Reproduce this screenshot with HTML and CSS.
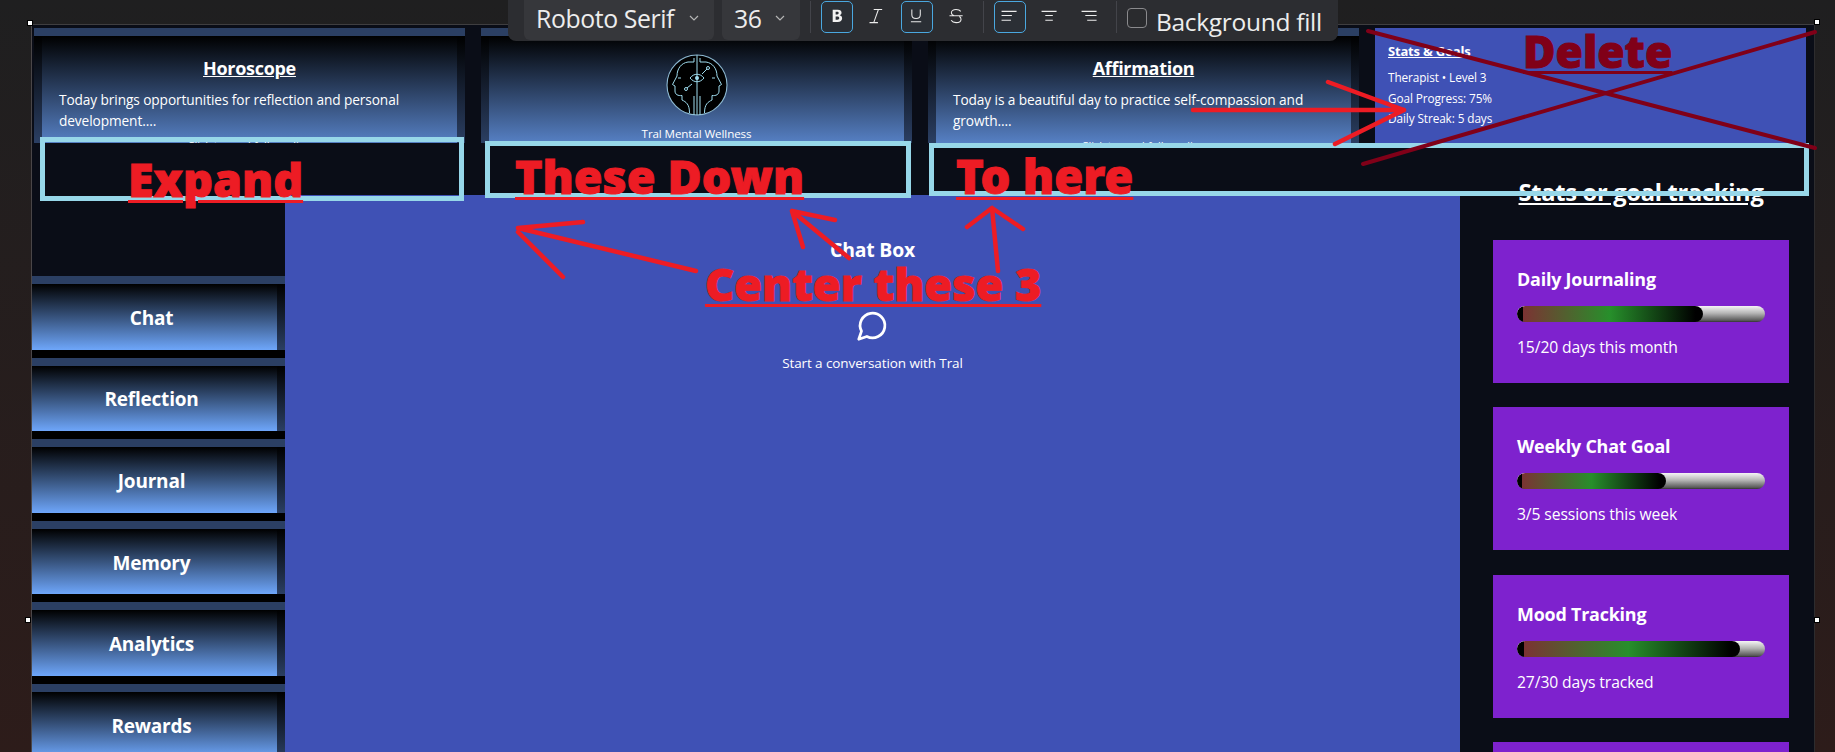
FILE: index.html
```html
<!DOCTYPE html>
<html lang="en">
<head>
<meta charset="utf-8">
<title>Tral Mental Wellness</title>
<link rel="stylesheet" href="styles.css">
</head>
<body>
<div class="stage">
  <header class="top">
    <section class="frame">
      <div class="card">
        <h3 class="card-title">Horoscope</h3>
        <p class="card-text">Today brings opportunities for reflection and personal development....</p>
        <p class="card-more">Click to read full reading</p>
      </div>
    </section>
    <section class="frame">
      <div class="card card-logo">
        <svg class="logo" viewBox="0 0 80 72" aria-label="Tral logo">
          <circle class="logo-disc" cx="40" cy="37" r="30"/>
          <g class="logo-line">
            <path d="M40 7V67"/>
            <path d="M37 10V14H31C24 15 20 21 20 28L15.500 36.500L18 38V43C18 46.500 21 48 25 47.500V52C29 54 32.500 56 32.500 65"/>
            <path d="M43 10V14H49C56 15 60 21 60 28L64.500 36.500L62 38V43C62 46.500 59 48 55 47.500V52C51 54 47.500 56 47.500 65"/>
            <path d="M37 67V48"/>
            <path d="M43 67V48"/>
            <path d="M30 40L35 36"/>
            <path d="M50 21L45 26"/>
            <path d="M33 30C37 25 43 25 47 30C43 35 37 35 33 30Z"/>
            <path d="M21 30H24M58 30H55"/>
            <circle cx="29" cy="41" r="1.500"/>
            <circle cx="51" cy="20" r="1.500"/>
            <circle class="logo-pupil" cx="40" cy="30" r="2"/>
          </g>
        </svg>
        <p class="logo-name">Tral Mental Wellness</p>
      </div>
    </section>
    <section class="frame">
      <div class="card">
        <h3 class="card-title">Affirmation</h3>
        <p class="card-text">Today is a beautiful day to practice self-compassion and growth....</p>
        <p class="card-more">Click to read full reading</p>
      </div>
    </section>
    <section class="stats">
      <h4 class="stats-title">Stats &amp; Goals</h4>
      <p class="stats-line">Therapist • Level 3</p>
      <p class="stats-line">Goal Progress: 75%</p>
      <p class="stats-line">Daily Streak: 5 days</p>
    </section>
  </header>

  <div class="body-row">
    <nav class="nav">
      <a class="nav-item"><span class="nav-label">Chat</span></a>
      <a class="nav-item"><span class="nav-label">Reflection</span></a>
      <a class="nav-item"><span class="nav-label">Journal</span></a>
      <a class="nav-item"><span class="nav-label">Memory</span></a>
      <a class="nav-item"><span class="nav-label">Analytics</span></a>
      <a class="nav-item"><span class="nav-label">Rewards</span></a>
    </nav>
    <main class="chat">
      <h2 class="chat-title">Chat Box</h2>
      <svg class="chat-icon" viewBox="0 0 24 24"><path d="M7.900 20A9 9 0 1 0 4 16.100L2 22Z"/></svg>
      <p class="chat-hint">Start a conversation with Tral</p>
    </main>
    <aside class="goals">
      <h2 class="goals-title">Stats or goal tracking</h2>
      <article class="goal">
        <h3 class="goal-name">Daily Journaling</h3>
        <div class="track"><div class="fill" style="width:75%"></div></div>
        <p class="goal-note">15/20 days this month</p>
      </article>
      <article class="goal">
        <h3 class="goal-name">Weekly Chat Goal</h3>
        <div class="track"><div class="fill" style="width:60%"></div></div>
        <p class="goal-note">3/5 sessions this week</p>
      </article>
      <article class="goal">
        <h3 class="goal-name">Mood Tracking</h3>
        <div class="track"><div class="fill" style="width:90%"></div></div>
        <p class="goal-note">27/30 days tracked</p>
      </article>
      <article class="goal"></article>
    </aside>
  </div>
</div>

<div class="toolbar">
  <div class="select select-font"><span>Roboto Serif</span><svg class="chev" viewBox="0 0 10 6"><path d="M1 1L5 5L9 1"/></svg></div>
  <div class="select select-size"><span>36</span><svg class="chev" viewBox="0 0 10 6"><path d="M1 1L5 5L9 1"/></svg></div>
  <i class="sep sep-a"></i>
  <div class="tool tool-on"><svg viewBox="0 0 32 32"><path class="solid" transform="translate(1.500 1.600) scale(.9 .82)" d="M11 8H17C20 8 21.500 9.700 21.500 12C21.500 13.600 20.700 14.700 19.300 15.300C21.100 15.800 22.200 17.200 22.200 19.100C22.200 22 20.200 24 17 24H11ZM14.500 10.800V14.300H16.300C17.500 14.300 18.100 13.600 18.100 12.500C18.100 11.400 17.500 10.800 16.300 10.800ZM14.500 16.800V21.200H16.500C18 21.200 18.800 20.400 18.800 19C18.800 17.600 18 16.800 16.500 16.800Z"/></svg></div>
  <div class="tool"><svg viewBox="0 0 32 32"><path d="M12.500 8H21.500M8 22H17M17.500 8L12.500 22"/></svg></div>
  <div class="tool tool-on"><svg viewBox="0 0 32 32"><path d="M10.500 8V13.500C10.500 16 12.500 17.500 15 17.500C17.500 17.500 19.500 16 19.500 13.500V8M9.500 21H20.500"/></svg></div>
  <div class="tool"><svg viewBox="0 0 32 32"><path d="M20 10C19 8.500 17 8 15 8C12 8 10 9.500 10 11.500C10 13 11 14 13 14.700M8 14.700H22M18.500 15.500C19.800 16.300 20.300 17 20.300 18.300C20.300 20.700 18 22 15 22C12.500 22 10.800 21.200 9.800 19.500"/></svg></div>
  <i class="sep sep-b"></i>
  <div class="tool tool-on"><svg viewBox="0 0 32 32"><path d="M7 10H23M7 14.500H18M7 19.500H17"/></svg></div>
  <div class="tool"><svg viewBox="0 0 32 32"><path d="M7 10H23M11 14.500H19M11 19.500H19"/></svg></div>
  <div class="tool"><svg viewBox="0 0 32 32"><path d="M7 10H23M11 14.500H23M13 19.500H23"/></svg></div>
  <i class="sep sep-c"></i>
  <span class="check-box"></span>
  <span class="check-label">Background fill</span>
</div>

<i class="handle handle-tl"></i>
<i class="handle handle-tr"></i>
<i class="handle handle-ml"></i>
<i class="handle handle-mr"></i>

<i class="mark mark-a"></i>
<i class="mark mark-b"></i>
<i class="mark mark-c"></i>

<svg class="ink" viewBox="0 0 1835 752">
  <g class="ink-red">
    <path d="M518 228L696 271M518 228L583 222M518 232L563 277"/>
    <path d="M792 211L849 258M792 211L835 220M792 211L803 247"/>
    <path d="M992 208L998 271M992 208L967 227M992 208L1023 229"/>
    <path d="M1193 110H1404M1404 110L1328 82M1404 110L1335 144"/>
  </g>
  <g class="ink-dark">
    <path d="M1368 31L1815 148"/>
    <path d="M1363 164L1815 32"/>
  </g>
</svg>

<span class="note note-expand">Expand</span>
<span class="note note-down">These Down</span>
<span class="note note-here">To here</span>
<span class="note note-center">Center these 3</span>
<span class="note note-delete">Delete</span>
</body>
</html>
```

FILE: styles.css
```css
* { box-sizing: border-box; }
html, body { margin: 0; height: 752px; overflow: hidden; }
body {
  position: relative;
  background: linear-gradient(180deg, #1f1f20 0%, #2d1c1a 100%);
  font-family: "Open Sans", "Noto Sans", sans-serif;
  color: #fff;
}
h2, h3, h4, p { margin: 0; }

.stage {
  width: 1784px;
  height: 728px;
  margin: 24px 0 0 31px;
  background: #0a0d17;
  border-left: 1px solid #4a4648;
  border-top: 1px solid #3f3e40;
  border-right: 1px solid #2d2c2e;
  overflow: hidden;
}

.top {
  display: flex;
  gap: 16px;
  height: 145px;
  padding: 3px 0 27px 2px;
}
.frame {
  flex: 0 0 431px;
  height: 115px;
  padding: 0 8px;
  border-top: 8px solid #2b3f63;
  background: linear-gradient(180deg, #000 0%, #2b3f63 100%);
}
.card {
  height: 100%;
  padding: 21px 17px 0;
  background: linear-gradient(180deg, #000 0%, #5680c4 100%);
  overflow: hidden;
}
.card-title {
  font-size: 18px;
  line-height: 22px;
  font-weight: 700;
  letter-spacing: -0.300px;
  text-align: center;
  text-decoration: underline;
}
.card-text {
  margin-top: 9.500px;
  font-size: 13.700px;
  line-height: 21px;
  letter-spacing: -0.100px;
}
.card-more {
  margin-top: 7.500px;
  font-size: 11px;
  line-height: 16px;
  text-align: center;
}
.card-logo { padding: 12px 0 0; text-align: center; }
.logo { display: block; width: 80px; height: 72px; margin: 0 auto; }
.logo-disc { fill: #000; stroke: #8db9d2; stroke-width: 1.100; }
.logo-line { fill: none; stroke: #9fdcee; stroke-width: 1; }
.logo-pupil { fill: #9fdcee; stroke: none; }
.logo-name {
  margin-top: 6px;
  font-size: 11.600px;
  line-height: 16px;
  letter-spacing: -0.100px;
}

.stats {
  flex: 0 0 431px;
  height: 115px;
  padding: 13px 13px 0;
  background: #3f51b5;
}
.stats-title {
  font-size: 13px;
  line-height: 20px;
  font-weight: 700;
  letter-spacing: -0.200px;
  text-decoration: underline;
  margin-bottom: 6px;
}
.stats-line {
  font-size: 11.800px;
  line-height: 20.500px;
  letter-spacing: -0.100px;
}

.body-row {
  display: grid;
  grid-template-columns: 253px 1175px 354px;
  height: 582px;
}

.nav { padding-top: 106px; }
.nav-item {
  display: block;
  height: 81.600px;
  padding-right: 8px;
  border-top: 8px solid #2b3f63;
  border-bottom: 8px solid #000;
  background: linear-gradient(180deg, #000 0%, #2b3f63 100%);
}
.nav-label {
  display: flex;
  align-items: center;
  justify-content: center;
  height: 100%;
  padding: 2px 6px 0 0;
  font-size: 19px;
  font-weight: 700;
  letter-spacing: -0.200px;
  background: linear-gradient(180deg, #000 0%, #6ea6fa 100%);
}

.chat {
  margin-top: 25px;
  background: #3f51b5;
  display: flex;
  flex-direction: column;
  align-items: center;
  padding-top: 43px;
}
.chat-title {
  font-size: 19.400px;
  line-height: 24px;
  font-weight: 700;
  letter-spacing: -0.200px;
}
.chat-icon {
  width: 33px;
  height: 33px;
  margin-top: 47px;
  fill: none;
  stroke: #fff;
  stroke-width: 2;
  stroke-linejoin: round;
}
.chat-hint {
  margin-top: 11px;
  font-size: 13.500px;
  line-height: 20px;
  letter-spacing: -0.100px;
}

.goals { padding: 5px 25px 0 33px; }
.goals-title {
  margin: 0 0 30px;
  font-size: 23.700px;
  line-height: 35px;
  font-weight: 700;
  letter-spacing: -0.300px;
  text-align: center;
  text-decoration: underline;
}
.goal {
  height: 143px;
  margin-bottom: 24.300px;
  padding: 27px 24px 0;
  background: #7e22ce;
}
.goal-name {
  font-size: 17.900px;
  line-height: 24px;
  font-weight: 700;
  letter-spacing: -0.200px;
}
.track {
  height: 16px;
  margin-top: 15px;
  border-radius: 8px;
  background: linear-gradient(180deg, #f5f5f5 0%, #b5b5b5 45%, #5a5a5a 90%, #333 100%);
  overflow: hidden;
}
.fill {
  height: 100%;
  border-radius: 8px;
  background: linear-gradient(90deg, #000 3.300%, #7b3333 3.300%, #278f2b 50%, #000 96%);
}
.goal-note {
  margin-top: 15px;
  font-size: 15.700px;
  line-height: 20px;
  letter-spacing: -0.100px;
}

.toolbar {
  position: absolute;
  left: 508px;
  top: 0;
  width: 830px;
  height: 41px;
  display: flex;
  align-items: flex-start;
  background: #2c2d31;
  border-radius: 0 0 8px 8px;
}
.select {
  display: flex;
  align-items: center;
  justify-content: space-between;
  height: 40px;
  padding: 0 15px 5px 12px;
  background: #36373b;
  border-radius: 0 0 6px 6px;
  font-size: 24.800px;
  letter-spacing: -0.400px;
  color: #ededed;
}
.select-font { width: 190px; margin-left: 16px; }
.select-size { width: 78px; margin-left: 8px; }
.chev { width: 10px; height: 6px; fill: none; stroke: #b5b5b5; stroke-width: 1.200; }
.sep { flex: none; width: 1px; height: 32px; margin-top: 1px; background: #43444a; }
.sep-a { margin: 1px 10px 0 10px; }
.sep-b { margin: 1px 10px 0 2px; }
.sep-c { margin: 1px 10px 0 2px; }
.tool {
  flex: none;
  width: 32px;
  height: 32px;
  margin: 1px 8px 0 0;
  border: 1px solid transparent;
  border-radius: 5px;
}
.tool svg { display: block; width: 30px; height: 30px; fill: none; stroke: #ececec; stroke-width: 1.100; }
.tool .solid { fill: #f2f2f2; stroke: none; }
.tool-on { border-color: #4aa8e0; background: #2b2f35; }
.check-box {
  flex: none;
  width: 20px;
  height: 20px;
  margin-top: 8px;
  border: 1px solid #8a8a8d;
  border-radius: 4px;
  background: #2a2b2e;
}
.check-label {
  margin: 3px 0 0 9px;
  font-size: 24.500px;
  line-height: 38px;
  letter-spacing: -0.300px;
  color: #ededed;
  white-space: nowrap;
}

.handle {
  position: absolute;
  width: 6px;
  height: 6px;
  background: #fff;
  border: 1px solid #000;
}
.handle-tl { left: 27px; top: 20px; }
.handle-tr { left: 1814px; top: 19px; }
.handle-ml { left: 25px; top: 617px; }
.handle-mr { left: 1814px; top: 617px; }

.mark { position: absolute; border: 5px solid #97d7e9; }
.mark-a { left: 40px; top: 137px; width: 424px; height: 64px; }
.mark-b { left: 485px; top: 141px; width: 426px; height: 57px; }
.mark-c { left: 929px; top: 143px; width: 880px; height: 53px; }

.ink { position: absolute; left: 0; top: 0; width: 1835px; height: 752px; fill: none; stroke-linecap: round; }
.ink-red { stroke: #ed1c24; stroke-width: 4.500; }
.ink-dark { stroke: #800018; stroke-width: 4; }

.note {
  position: absolute;
  font-family: "Noto Sans", "Open Sans", sans-serif;
  font-weight: 900;
  font-size: 46.600px;
  line-height: 60px;
  color: #ed1c24;
  -webkit-text-stroke: 1px currentColor;
  text-decoration: underline;
  text-decoration-thickness: 3px;
  text-underline-offset: 3px;
  white-space: nowrap;
}
.note-expand { left: 128px; top: 149px; }
.note-down { left: 515px; top: 146px; }
.note-here { left: 956px; top: 146px; font-size: 47px; }
.note-center { left: 705px; top: 254px; font-size: 45px; }
.note-delete { left: 1523px; top: 21px; font-size: 44.300px; color: #800018; }
```
